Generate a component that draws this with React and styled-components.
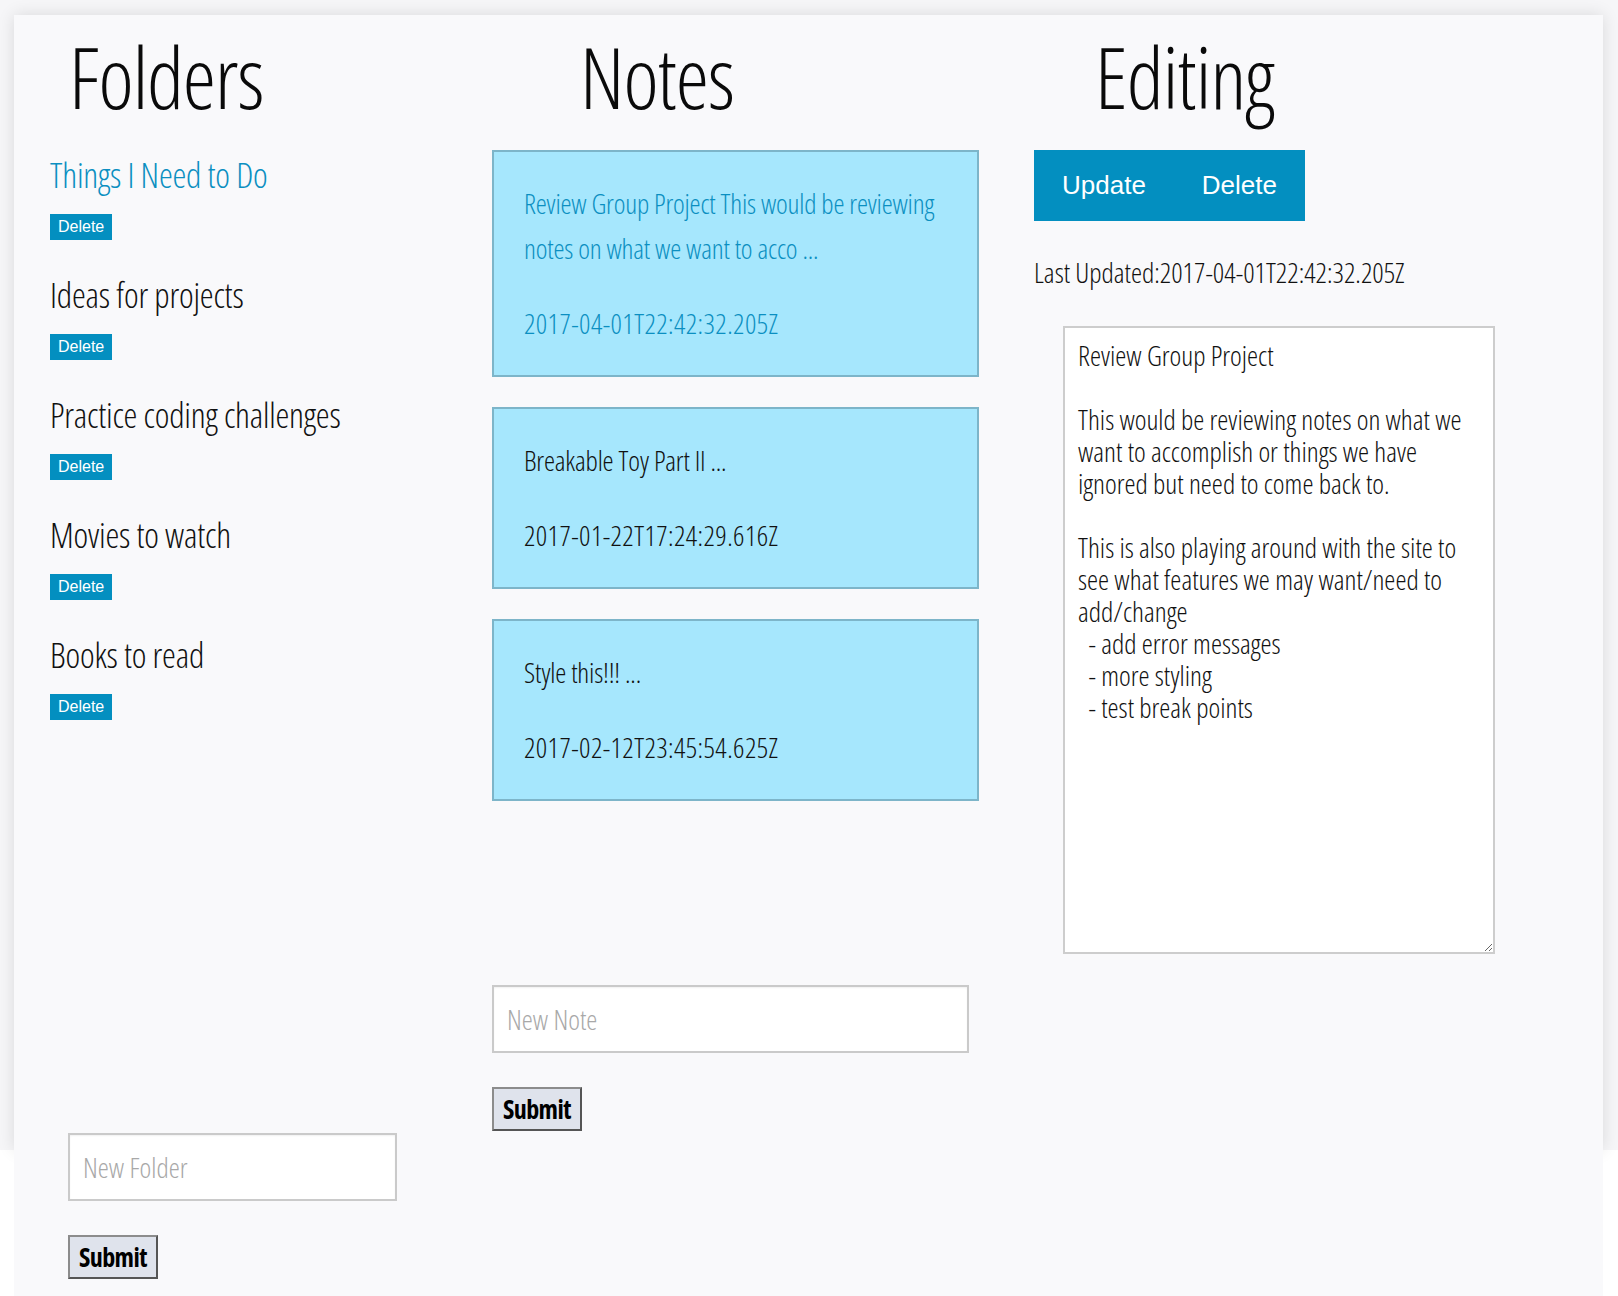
import React from "react";
import styled, { createGlobalStyle } from "styled-components";

const folders = [
  { name: "Things I Need to Do", active: true },
  { name: "Ideas for projects" },
  { name: "Practice coding challenges" },
  { name: "Movies to watch" },
  { name: "Books to read" },
];

const notes = [
  {
    title:
      "Review Group Project This would be reviewing notes on what we want to acco ...",
    date: "2017-04-01T22:42:32.205Z",
    active: true,
  },
  { title: "Breakable Toy Part II ...", date: "2017-01-22T17:24:29.616Z" },
  { title: "Style this!!! ...", date: "2017-02-12T23:45:54.625Z" },
];

const noteBody = `Review Group Project

This would be reviewing notes on what we want to accomplish or things we have ignored but need to come back to.

This is also playing around with the site to see what features we may want/need to add/change
  - add error messages
  - more styling
  - test break points`;

export default function App() {
  return (
    <>
      <GlobalStyle />
      <Card>
        <Column>
          <Heading $indent={55}>Folders</Heading>
          <FolderList>
            {folders.map((f) => (
              <FolderItem key={f.name}>
                <FolderName $active={f.active}>{f.name}</FolderName>
                <SmallDelete>Delete</SmallDelete>
              </FolderItem>
            ))}
          </FolderList>
          <NewForm $top={413} $indent={54}>
            <TextInput placeholder="New Folder" $width={329} />
            <SubmitButton>Submit</SubmitButton>
          </NewForm>
        </Column>

        <Column>
          <Heading $indent={88}>Notes</Heading>
          <NoteList>
            {notes.map((n) => (
              <NoteCard key={n.date} $active={n.active}>
                <NoteTitle>{n.title}</NoteTitle>
                <NoteDate>{n.date}</NoteDate>
              </NoteCard>
            ))}
          </NoteList>
          <NewForm $top={184} $indent={0}>
            <TextInput placeholder="New Note" $width={477} />
            <SubmitButton>Submit</SubmitButton>
          </NewForm>
        </Column>

        <Column>
          <Heading $indent={61}>Editing</Heading>
          <ActionBar>
            <ActionButton>Update</ActionButton>
            <ActionButton>Delete</ActionButton>
          </ActionBar>
          <Updated>Last Updated:2017-04-01T22:42:32.205Z</Updated>
          <Editor defaultValue={noteBody} />
        </Column>
      </Card>
    </>
  );
}

const GlobalStyle = createGlobalStyle`
  html {
    background: linear-gradient(#f6f6f8, #f6f6f8) top left / 100% 1150px no-repeat, #fff;
  }
  body {
    margin: 0;
    font-family: "Open Sans", "Roboto Condensed", sans-serif;
    font-stretch: 75%;
    font-weight: 300;
    color: #111;
  }
`;

const Card = styled.main`
  position: relative;
  box-sizing: border-box;
  min-height: 1281px;
  margin: 15px 15px 0 14px;
  padding-top: 20px;
  background: #f9f9fb;
  display: grid;
  grid-template-columns: 478px 542px 1fr;
  align-items: start;

  &::before {
    content: "";
    position: absolute;
    left: 0;
    right: 0;
    top: 0;
    height: 1135px;
    box-shadow: 0 0 16px rgba(0, 0, 0, 0.12);
    z-index: -1;
  }
`;

const Column = styled.section`
  display: flex;
  flex-direction: column;
  align-items: flex-start;
`;

const Heading = styled.h1`
  margin: 0 0 31px;
  padding-left: ${(p) => p.$indent}px;
  font-size: 84px;
  line-height: 84px;
  font-weight: 300;
  letter-spacing: -1px;
  color: #0a0a0a;
`;

const FolderList = styled.div`
  display: flex;
  flex-direction: column;
  gap: 35px;
  padding: 5px 0 0 36px;
`;

const FolderItem = styled.div`
  display: flex;
  flex-direction: column;
  align-items: flex-start;
  gap: 19px;
`;

const FolderName = styled.div`
  font-size: 35px;
  line-height: 40px;
  letter-spacing: -0.2px;
  color: ${(p) => (p.$active ? "#0b8fc1" : "#111")};
`;

const SmallDelete = styled.button`
  height: 26px;
  padding: 0 8px;
  border: none;
  background: #038fc0;
  color: #fff;
  font: 16px/26px "Liberation Sans", Arial, sans-serif;
  cursor: pointer;
`;

const NoteList = styled.div`
  display: flex;
  flex-direction: column;
  gap: 30px;
  width: 487px;
`;

const NoteCard = styled.article`
  box-sizing: border-box;
  padding: 29px 26px 29px 30px;
  border: 2px solid #7db5c9;
  background: #a6e7fd;
  color: ${(p) => (p.$active ? "#0b8fc1" : "#111")};
  font-size: 28px;
  line-height: 45px;
`;

const NoteTitle = styled.p`
  margin: 0 0 30px;
  letter-spacing: -0.2px;
`;

const NoteDate = styled.p`
  margin: 0;
  letter-spacing: 0.4px;
`;

const NewForm = styled.form`
  display: flex;
  flex-direction: column;
  align-items: flex-start;
  gap: 34px;
  margin-top: ${(p) => p.$top}px;
  padding-left: ${(p) => p.$indent}px;
`;

const TextInput = styled.input`
  box-sizing: border-box;
  width: ${(p) => p.$width}px;
  height: 68px;
  padding: 0 13px;
  border: 2px solid #cacaca;
  background: #fff;
  box-shadow: inset 0 1px 2px rgba(0, 0, 0, 0.06);
  font: inherit;
  font-size: 28px;
  color: #111;
  outline: none;

  &::placeholder {
    color: #a8a8a8;
  }
`;

const SubmitButton = styled.button`
  box-sizing: border-box;
  height: 44px;
  padding: 0 9px;
  border: 2px solid;
  border-color: #8c8c8c #555 #555 #8c8c8c;
  background: #dfe3ec;
  color: #000;
  font: inherit;
  font-weight: 700;
  font-size: 26px;
  line-height: 38px;
  letter-spacing: -0.6px;
  cursor: pointer;
`;

const ActionBar = styled.div`
  display: flex;
  height: 71px;
  background: #038fc0;
`;

const ActionButton = styled.button`
  padding: 0 28px;
  border: none;
  background: transparent;
  color: #fff;
  font: 26px "Liberation Sans", Arial, sans-serif;
  cursor: pointer;
`;

const Updated = styled.div`
  margin-top: 29px;
  font-size: 28px;
  line-height: 44px;
`;

const Editor = styled.textarea`
  box-sizing: border-box;
  width: 432px;
  height: 628px;
  margin: 32px 0 0 29px;
  padding: 11px 12px 11px 13px;
  border: 2px solid #cdcdcd;
  background: #fff;
  font: inherit;
  font-size: 28px;
  line-height: 32px;
  color: #111;
  outline: none;
`;
